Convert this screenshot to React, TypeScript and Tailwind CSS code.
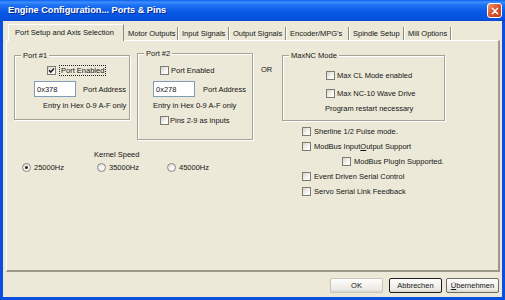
import React from "react";

type Kids = { children?: React.ReactNode };

function Check({ checked = false }: { checked?: boolean }) {
  return (
    <span className="inline-flex items-center justify-center w-[9px] h-[9px] shrink-0 border border-[#7b7b74] bg-[linear-gradient(135deg,#d6d4c8,#fbfbf8_70%)]">
      {checked && (
        <svg viewBox="0 0 7 7" className="w-[7px] h-[7px]">
          <path d="M1 3.3 L2.8 5.1 L6 1.6" stroke="#1c1c1c" strokeWidth="1.5" fill="none" />
        </svg>
      )}
    </span>
  );
}

function Radio({ checked = false }: { checked?: boolean }) {
  return (
    <span className="inline-flex items-center justify-center w-[9px] h-[9px] shrink-0 rounded-full border border-[#8a8a82] bg-[radial-gradient(circle_at_65%_65%,#ffffff,#d9d7cc)]">
      {checked && <span className="w-[3px] h-[3px] rounded-full bg-[#222]" />}
    </span>
  );
}

// etched group box, label sits over the top border
function Group({ label, className, children }: Kids & { label: string; className: string }) {
  return (
    <div className={`relative border border-[#a5a398] shadow-[inset_1px_1px_0_#fff,1px_1px_0_#fff] ${className}`}>
      <span className="absolute left-[6px] top-[-5px] bg-[#ECE9D8] px-[2px] leading-[9px]">{label}</span>
      {children}
    </div>
  );
}

function Field({ value }: { value: string }) {
  return (
    <div className="w-[42px] h-[16px] border border-[#7f9db9] bg-white pl-[2px] pt-[3px] leading-[9px]">{value}</div>
  );
}

const tabs = [
  { name: "Motor Outputs", w: "w-[54px]" },
  { name: "Input Signals", w: "w-[51px]" },
  { name: "Output Signals", w: "w-[57px]" },
  { name: "Encoder/MPG's", w: "w-[63px]" },
  { name: "Spindle Setup", w: "w-[55px]" },
  { name: "Mill Options", w: "w-[47px]" },
];

function CheckRow({ label, indent = "" }: { label: React.ReactNode; indent?: string }) {
  return (
    <div className={`flex items-center h-[15px] gap-[3px] ${indent}`}>
      <Check />
      <span className="leading-[9px]">{label}</span>
    </div>
  );
}

export default function App() {
  return (
    <div className="w-[505px] h-[300px] flex flex-col bg-[#0a4fdf] font-['Liberation_Sans',Arial,sans-serif] text-[7.5px] text-[#151515]">
      {/* title bar */}
      <div className="h-[21px] flex items-center justify-between pl-[8px] pr-[3px] bg-[linear-gradient(to_bottom,#0a5ef0_0%,#3d8ffb_10%,#1d70f2_25%,#0a5ae6_55%,#0553e0_85%,#0449d2_100%)]">
        <span className="text-white font-bold text-[9.2px] leading-[11px] [text-shadow:1px_1px_0_#0a2a8a]">
          Engine Configuration... Ports &amp; Pins
        </span>
        <div className="w-[15px] h-[15px] rounded-[3px] border border-white flex items-center justify-center bg-[linear-gradient(135deg,#f09878,#d8502c_50%,#c0401c)]">
          <svg viewBox="0 0 9 9" className="w-[8px] h-[8px]">
            <path d="M1.5 1.5 L7.5 7.5 M7.5 1.5 L1.5 7.5" stroke="#fff" strokeWidth="1.6" strokeLinecap="round" />
          </svg>
        </div>
      </div>

      {/* dialog body */}
      <div className="flex-1 mx-[3px] mb-[3px] bg-[#ECE9D8] flex flex-col">
        {/* tabs */}
        <div className="h-[19px] pl-[5px] flex items-end">
          <div className="relative z-10 w-[116px] h-[17px] mb-[-1px] pl-[6px] pt-[3px] leading-[9px] bg-[#ECE9D8] border-t border-l border-white border-r border-r-[#8d8a7e]">
            Port Setup and Axis Selection
          </div>
          {tabs.map((t) => (
            <div
              key={t.name}
              className={`${t.w} h-[13px] pl-[4px] flex items-center leading-[9px] border-r border-[#8d8a7e] shadow-[1px_0_0_#fff]`}
            >
              {t.name}
            </div>
          ))}
        </div>

        {/* tab page */}
        <div className="h-[232px] ml-[3px] w-[494px] border-t border-l border-white border-r-2 border-b-2 border-r-[#9b988a] border-b-[#9b988a] flex items-start pl-[7px]">
          {/* left column */}
          <div className="flex flex-col">
            <div className="flex items-start">
              <Group label="Port #1" className="w-[116px] h-[65px] mt-[14px]">
                <div className="flex items-center h-[11px] mt-[9px] pl-[32px] gap-[3px]">
                  <Check checked />
                  <span className="border border-dotted border-[#222] px-[1px] leading-[9px]">Port Enabled</span>
                </div>
                <div className="flex items-center mt-[5px] ml-[19px] gap-[7px]">
                  <Field value="0x378" />
                  <span className="leading-[9px]">Port Address</span>
                </div>
                <div className="h-[10px] leading-[10px] mt-[4px] ml-[28px]">Entry in Hex 0-9 A-F only</div>
              </Group>

              <Group label="Port #2" className="w-[116px] h-[87px] mt-[12px] ml-[7px]">
                <div className="flex items-center h-[11px] mt-[11px] pl-[22px] gap-[2px]">
                  <Check />
                  <span className="leading-[9px]">Port Enabled</span>
                </div>
                <div className="flex items-center mt-[5px] ml-[15px] gap-[8px]">
                  <Field value="0x278" />
                  <span className="leading-[9px]">Port Address</span>
                </div>
                <div className="h-[10px] leading-[10px] mt-[4px] ml-[15px]">Entry in Hex 0-9 A-F only</div>
                <div className="flex items-center h-[11px] mt-[4px] pl-[22px] gap-[1px]">
                  <Check />
                  <span className="leading-[9px]">Pins 2-9 as inputs</span>
                </div>
              </Group>
            </div>

            <div className="mt-[10px] ml-[80px] leading-[9px]">Kernel Speed</div>
            <div className="flex items-center h-[10px] mt-[3px] ml-[8px]">
              <div className="w-[75px] flex items-center gap-[3px]">
                <Radio checked />
                <span className="leading-[9px]">25000Hz</span>
              </div>
              <div className="w-[70px] flex items-center gap-[3px]">
                <Radio />
                <span className="leading-[9px]">35000Hz</span>
              </div>
              <div className="flex items-center gap-[3px]">
                <Radio />
                <span className="leading-[9px]">45000Hz</span>
              </div>
            </div>
          </div>

          {/* right side */}
          <div className="ml-[8px] mt-[24px] w-[21px] leading-[9px]">OR</div>
          <div className="flex flex-col">
            <Group label="MaxNC Mode" className="w-[163px] h-[66px] mt-[14px]">
              <div className="flex items-center h-[11px] mt-[14px] pl-[43px] gap-[2px]">
                <Check />
                <span className="leading-[9px]">Max CL Mode enabled</span>
              </div>
              <div className="flex items-center h-[11px] mt-[7px] pl-[43px] gap-[2px]">
                <Check />
                <span className="leading-[9px]">Max NC-10 Wave Drive</span>
              </div>
              <div className="h-[10px] leading-[10px] mt-[5px] pl-[42px]">Program restart necessary</div>
            </Group>

            <div className="ml-[20px] mt-[3px] flex flex-col">
              <CheckRow label="Sherline 1/2 Pulse mode." />
              <CheckRow
                label={
                  <>
                    ModBus Input<span className="underline">O</span>utput Support
                  </>
                }
              />
              <CheckRow label="ModBus PlugIn Supported." indent="ml-[40px]" />
              <CheckRow label="Event Driven Serial Control" />
              <CheckRow label="Servo Serial Link Feedback" />
            </div>
          </div>
        </div>

        {/* buttons */}
        <div className="flex justify-end mt-[6px] pr-[3px]">
          <button className="w-[53px] h-[15px] rounded-[2px] border border-[#c9c6b8] bg-[linear-gradient(to_bottom,#fdfdfb,#ecebe5_80%,#d8d6cc)] leading-[9px]">
            OK
          </button>
          <button className="w-[53px] h-[15px] ml-[6px] rounded-[2px] border border-[#1e1e1e] bg-[linear-gradient(to_bottom,#fdfdfb,#ecebe5_80%,#d8d6cc)] leading-[9px]">
            Abbrechen
          </button>
          <button className="w-[53px] h-[15px] ml-[4px] rounded-[2px] border border-[#6e6c66] bg-[linear-gradient(to_bottom,#fdfdfb,#ecebe5_80%,#d8d6cc)] leading-[9px]">
            <span className="underline">Ü</span>bernehmen
          </button>
        </div>
      </div>
    </div>
  );
}
